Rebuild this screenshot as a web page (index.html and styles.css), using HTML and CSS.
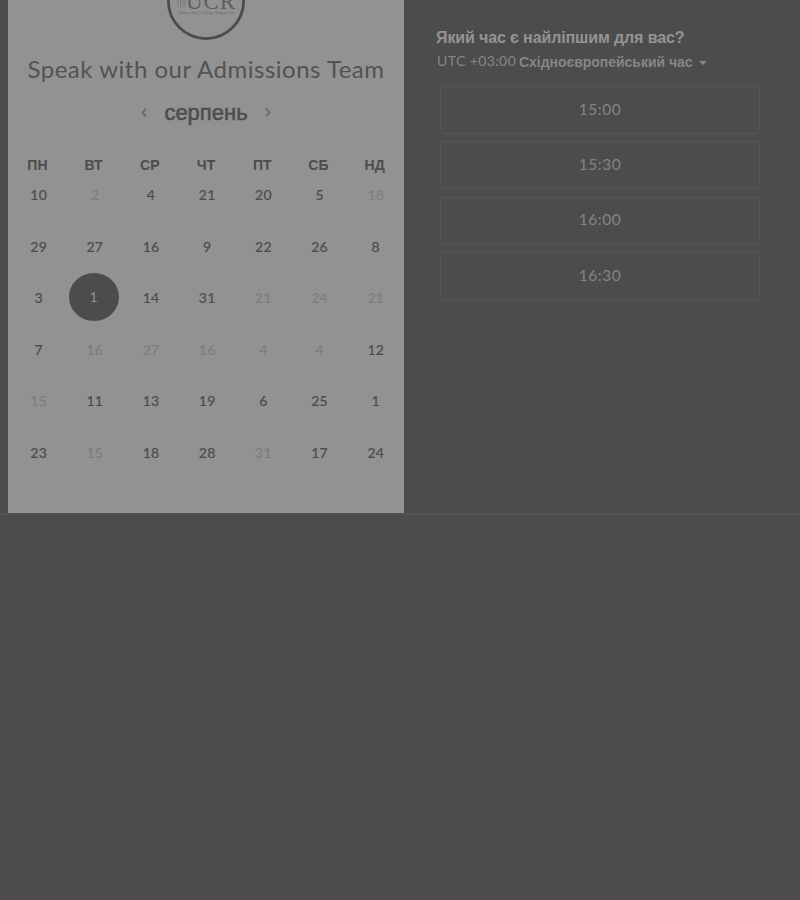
FILE: index.html
```
<!DOCTYPE html>
<html lang="uk">
<head>
<meta charset="utf-8">
<title>Speak with our Admissions Team</title>
<link rel="stylesheet" href="styles.css">
</head>
<body>
<main class="scheduler">
  <section class="calendar">
    <svg class="logo" width="80" height="42" viewBox="0 0 80 42">
      <circle cx="40" cy="1" r="37.6" fill="none" stroke="#4c4c4c" stroke-width="2.8"/>
      <path d="M12 0v7M14.500 0v8M17 0v7M19 0v7" stroke="#7d7d7d" stroke-width="1"/>
      <text class="logo-name" x="20" y="8.500" textLength="49">UCR</text>
      <text class="logo-sub" x="12" y="13.500" textLength="56" lengthAdjust="spacingAndGlyphs">University College Roosevelt</text>
    </svg>
    <h1 class="title">Speak with our Admissions Team</h1>
    <div class="month">
      <svg class="arrow" width="8" height="12" viewBox="0 0 8 12"><path d="M6 1.500L2.500 5.500l3.500 4"/></svg>
      <span class="month-name">серпень</span>
      <svg class="arrow" width="8" height="12" viewBox="0 0 8 12"><path d="M2 1.500l3.500 4-3.500 4"/></svg>
    </div>
    <div class="weekdays"><span>ПН</span><span>ВТ</span><span>СР</span><span>ЧТ</span><span>ПТ</span><span>СБ</span><span>НД</span></div>
    <div class="days">
      <span>10</span><span class="off">2</span><span>4</span><span>21</span><span>20</span><span>5</span><span class="off">18</span>
      <span>29</span><span>27</span><span>16</span><span>9</span><span>22</span><span>26</span><span>8</span>
      <span>3</span><span class="selected"><b>1</b></span><span>14</span><span>31</span><span class="off">21</span><span class="off">24</span><span class="off">21</span>
      <span>7</span><span class="off">16</span><span class="off">27</span><span class="off">16</span><span class="off">4</span><span class="off">4</span><span>12</span>
      <span class="off">15</span><span>11</span><span>13</span><span>19</span><span>6</span><span>25</span><span>1</span>
      <span>23</span><span class="off">15</span><span>18</span><span>28</span><span class="off">31</span><span>17</span><span>24</span>
    </div>
  </section>
  <section class="times">
    <h2 class="question">Який час є найліпшим для вас?</h2>
    <div class="zone"><span class="utc">UTC +03:00</span><span class="zone-name">Східноєвропейський час</span><i class="caret"></i></div>
    <div class="slots">
      <div class="slot">15:00</div>
      <div class="slot">15:30</div>
      <div class="slot">16:00</div>
      <div class="slot">16:30</div>
    </div>
  </section>
</main>
</body>
</html>
```
FILE: styles.css
```
* { box-sizing: border-box; }
body {
  margin: 0;
  height: 900px;
  overflow: hidden;
  background: #4c4c4c;
  color: #4c4c4c;
  font-family: Lato, "Liberation Sans", sans-serif;
  border-bottom: 2px solid #504a4c;
}
.scheduler {
  display: flex;
  height: 515px;
  padding-left: 8px;
  border-bottom: 2px solid #525252;
}
.calendar {
  width: 396px;
  background: #929292;
  display: flex;
  flex-direction: column;
  align-items: center;
}
.logo { display: block; flex: none; }
.logo-name { font: 23px "Liberation Serif", serif; fill: #5d5d5d; }
.logo-sub { font: 4.5px "Liberation Serif", serif; fill: #666; }
.title {
  margin: 10px 0 0;
  font-size: 24px;
  line-height: 34px;
  font-weight: 400;
  letter-spacing: 0.51px;
  white-space: nowrap;
  color: #525252;
}
.month {
  display: flex;
  align-items: center;
  gap: 16px;
  height: 28px;
  margin-top: 13px;
}
.month-name { font: 22px/28px "Liberation Sans", sans-serif; -webkit-text-stroke: 0.5px #4c4c4c; }
.arrow { fill: none; stroke: #6a6a6a; stroke-width: 1.8; }
.weekdays, .days {
  display: grid;
  grid-template-columns: repeat(7, 56.2px);
  text-align: center;
}
.weekdays {
  margin-top: 27px;
  font: bold 14px/22px "Liberation Sans", sans-serif;
}
.days {
  grid-auto-rows: 51.6px;
  align-items: center;
  margin-top: -7.4px;
  font-size: 14px;
  letter-spacing: 0.3px;
}
.days > span:not(.selected) { padding-left: 2.5px; -webkit-text-stroke: 0.2px currentColor; }
.off { color: #7e7e7e; }
.selected {
  display: flex;
  align-items: center;
  justify-content: center;
  justify-self: center;
  width: 50px;
  height: 48px;
  margin-top: -2px;
  border-radius: 50%;
  background: #4c4c4c;
  color: #929292;
}
.selected b { font-weight: 400; }
.times { width: 396px; padding: 28px 40px 0 32px; }
.question {
  margin: 0;
  font: bold 16px/20px "Liberation Sans", sans-serif;
  letter-spacing: -0.12px;
  color: #949494;
}
.zone {
  display: flex;
  align-items: center;
  height: 20px;
  margin: 4px 0 0 1px;
  color: #868686;
  white-space: nowrap;
}
.utc { width: 82px; font-size: 14px; line-height: 18px; letter-spacing: 0.4px; padding-bottom: 2px; }
.zone-name { font: bold 14px/20px "Liberation Sans", sans-serif; letter-spacing: -0.03px; }
.caret {
  margin: 2px 0 0 6px;
  border: 4px solid transparent;
  border-top-color: #868686;
  border-bottom: 0;
}
.slots {
  display: grid;
  grid-auto-rows: 48px;
  row-gap: 7.400px;
  margin: 14px 0 0 4px;
}
.slot {
  display: flex;
  align-items: center;
  justify-content: center;
  padding-bottom: 3px;
  border: 1px solid #565656;
  border-radius: 3px;
  color: #848484;
  font-size: 15.5px;
  letter-spacing: 0.5px;
}
```
